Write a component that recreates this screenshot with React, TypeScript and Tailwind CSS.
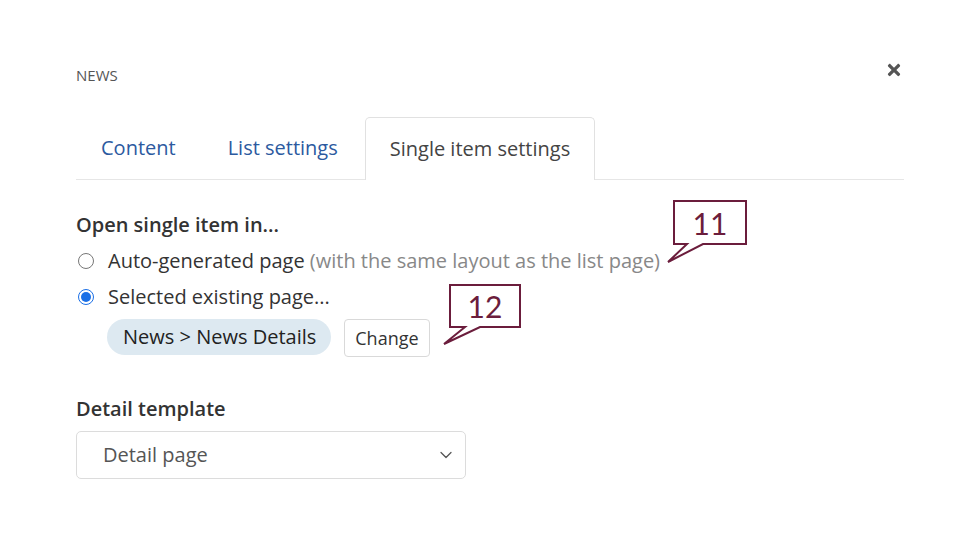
import { ChevronDown } from "lucide-react";
import { FaTimes } from "react-icons/fa";

function Callout({ label, className, tail }: { label: string; className: string; tail: string }) {
  return (
    <div className={`absolute ${className}`}>
      <svg className="absolute left-0 top-0 overflow-visible" width="1" height="1">
        <path d={tail} fill="white" stroke="#6b1d3c" strokeWidth="2" strokeLinejoin="miter" />
      </svg>
      <div className="relative flex h-full w-full items-center justify-center text-[30px] leading-none text-[#6b1d3c] [font-family:Lato,'Open_Sans',sans-serif]">
        {label}
      </div>
    </div>
  );
}

export default function App() {
  return (
    <div className="relative h-[554px] w-[958px] overflow-hidden bg-white [font-family:'Open_Sans',sans-serif]">
      <div className="ml-[76px] w-[828px] pt-[66px]">
        <div className="flex items-center justify-between">
          <span className="text-[15px] leading-[18px] text-[#555]">NEWS</span>
          <FaTimes className="-mt-[10px] mr-[1px] text-[#555]" size={18} />
        </div>

        <div className="mt-[33px] flex gap-[2px] border-b border-[#e6e6e6]">
          <button className="h-[62px] px-[25px] text-[20px] text-[#2c5a9f]">Content</button>
          <button className="h-[62px] px-[25px] text-[20px] text-[#2c5a9f]">List settings</button>
          <button className="-mb-px h-[63px] rounded-t-[5px] border border-b-0 border-[#e1e1e1] bg-white px-[24px] text-[20px] text-[#444]">
            Single item settings
          </button>
        </div>

        <div className="mt-[32px] text-[20px] font-semibold leading-[26px] text-[#333]">
          Open single item in...
        </div>

        <label className="mt-[5px] flex h-[36px] items-center gap-[14px] text-[20px]">
          <span className="ml-[2px] h-[16px] w-[16px] rounded-full border border-[#777] bg-white" />
          <span className="text-[#333]">
            Auto-generated page <span className="text-[#888]">(with the same layout as the list page)</span>
          </span>
        </label>

        <label className="flex h-[36px] items-center gap-[14px] text-[20px]">
          <span className="ml-[2px] flex h-[16px] w-[16px] items-center justify-center rounded-full border-[1.5px] border-[#1a6fe6] bg-white">
            <span className="h-[10px] w-[10px] rounded-full bg-[#1a6fe6]" />
          </span>
          <span className="text-[#333]">Selected existing page...</span>
        </label>

        <div className="mt-[4px] flex items-start gap-[13px] pl-[31px]">
          <span className="flex h-[36px] items-center rounded-full bg-[#dde9f1] pl-[16px] pr-[15px] text-[20px] text-[#222]">
            News &gt; News Details
          </span>
          <button className="h-[38px] rounded-[4px] border border-[#d9d9d9] bg-white px-[10px] text-[18px] text-[#333]">
            Change
          </button>
        </div>

        <div className="mt-[39px] text-[20px] font-semibold leading-[26px] text-[#333]">Detail template</div>

        <div className="mt-[9px] flex h-[48px] w-[390px] items-center justify-between rounded-[5px] border border-[#dcdcdc] pl-[26px] pr-[9px]">
          <span className="text-[20px] text-[#555]">Detail page</span>
          <ChevronDown size={20} strokeWidth={1.5} className="text-[#555]" />
        </div>
      </div>

      <Callout
        label="11"
        className="left-[673px] top-[200px] h-[45px] w-[74px]"
        tail="M1 1 H73 V44 H30 L-5 62 L14 44 H1 Z"
      />
      <Callout
        label="12"
        className="left-[449px] top-[284px] h-[44px] w-[72px]"
        tail="M1 1 H71 V43 H31 L-5 60 L16 43 H1 Z"
      />
    </div>
  );
}
